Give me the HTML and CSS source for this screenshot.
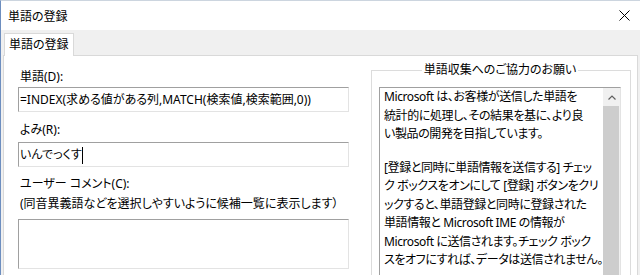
FILE: index.html
```html
<!DOCTYPE html>
<html lang="ja">
<head>
    <meta charset="UTF-8">
    <meta name="viewport" content="width=device-width, initial-scale=1.0">
    <title>単語の登録</title>
    <link rel="stylesheet" href="styles.css">
</head>
<body>
    <div class="window">
        <header class="titlebar">
            <span class="title">単語の登録</span>
            <svg class="close" width="11" height="11" viewBox="0 0 11 11">
                <path d="M0.5 0.5 L10.5 10.5 M10.5 0.5 L0.5 10.5" stroke="#000" stroke-width="1" fill="none"/>
            </svg>
        </header>

        <nav class="tabstrip">
            <div class="tab">単語の登録</div>
        </nav>

        <main class="panel">
            <section class="fields">
                <label class="label first">単語(D):</label>
                <div class="field">=INDEX(求める値がある列,MATCH(検索値,検索範囲,0))</div>

                <label class="label reading">よみ(R):</label>
                <div class="field reading-field">いんでっくす<span class="caret"></span></div>

                <label class="label comment">ユーザー コメント(C):</label>
                <div class="note">(同音異義語などを選択しやすいように候補一覧に表示します）</div>
                <div class="field comment-box"></div>
            </section>

            <fieldset class="group">
                <legend>単語収集へのご協力のお願い</legend>
                <div class="info">
                    <div class="info-text">
                        <p>Microsoft は、お客様が送信した単語を<br>統計的に処理し、その結果を基に、より良<br>い製品の開発を目指しています。</p>
                        <p>[登録と同時に単語情報を送信する] チェッ<br>ク ボックスをオンにして [登録] ボタンをクリ<br>ックすると、単語登録と同時に登録された<br>単語情報と Microsoft IME の情報が<br>Microsoft に送信されます。チェック ボック<br>スをオフにすれば、データは送信されません。</p>
                    </div>
                    <div class="scrollbar">
                        <div class="arrow">
                            <svg width="8" height="5" viewBox="0 0 8 5">
                                <path d="M0.5 4.5 L4 1 L7.5 4.5" stroke="#606060" stroke-width="1.2" fill="none"/>
                            </svg>
                        </div>
                        <div class="thumb"></div>
                    </div>
                </div>
            </fieldset>
        </main>
    </div>
</body>
</html>
```

FILE: styles.css
```css
body {
    margin: 0;
    font-family: "Noto Sans", "Noto Sans CJK JP", sans-serif;
    font-size: 12px;
    font-feature-settings: "palt";
    color: #000;
    background: #f0f0f0;
}

.window {
    width: 640px;
    height: 275px;
    overflow: hidden;
    box-sizing: border-box;
    border-left: 1px solid #6d8ebf;
    border-top: 1px solid #ccd5df;
    background: #f0f0f0;
}

.titlebar {
    height: 29px;
    background: #fff;
    display: flex;
    align-items: center;
    justify-content: space-between;
    padding: 0 10px 0 7px;
}

.tabstrip {
    height: 25px;
    box-sizing: border-box;
    padding: 3px 0 0 3px;
    display: flex;
    align-items: flex-end;
}

.tab {
    position: relative;
    height: 22px;
    line-height: 21px;
    padding: 0 4px;
    margin-bottom: -1px;
    background: #fff;
    border: 1px solid #d9d9d9;
    border-bottom: none;
}

.panel {
    display: flex;
    gap: 22px;
    height: 300px;
    margin: 0 2px;
    padding: 6px 6px 0 14px;
    background: #fff;
    border: 1px solid #d9d9d9;
}

.fields {
    width: 331px;
    padding-top: 7px;
    display: flex;
    flex-direction: column;
}

.label {
    line-height: 16px;
    padding-left: 2px;
}

.label.reading {
    margin-top: 10px;
}

.label.comment {
    margin-top: 9px;
}

.field {
    box-sizing: border-box;
    height: 25px;
    line-height: 23px;
    padding-left: 1px;
    margin-top: 2px;
    border: 1px solid;
    border-color: #a0a0a0 #e3e3e3 #e3e3e3 #a0a0a0;
    white-space: nowrap;
    overflow: hidden;
}

.reading-field {
    margin-top: 4px;
}

.caret {
    display: inline-block;
    width: 1px;
    height: 17px;
    background: #000;
    vertical-align: middle;
}

.note {
    line-height: 16px;
    padding-left: 2px;
    margin-top: 4px;
}

.comment-box {
    height: 50px;
    margin-top: 7px;
}

.group {
    width: 260px;
    height: 260px;
    box-sizing: border-box;
    margin: 0;
    min-width: 0;
    padding: 9px 9px 0 7px;
    border: 1px solid #dcdcdc;
}

.group legend {
    margin: 0 auto;
    padding: 0 2px;
    line-height: 16px;
}

.info {
    display: flex;
    height: 220px;
    border: 1px solid;
    border-color: #a0a0a0 #e3e3e3 #e3e3e3 #a0a0a0;
}

.info-text {
    flex: 1;
    min-width: 0;
    overflow: hidden;
    padding-left: 4px;
    line-height: 18.5px;
    letter-spacing: -0.4px;
    white-space: nowrap;
}

.info-text p {
    margin: 0;
}

.info-text p + p {
    margin-top: 15px;
}

.scrollbar {
    width: 17px;
    background: #f0f0f0;
    display: flex;
    flex-direction: column;
}

.arrow {
    height: 18px;
    display: flex;
    align-items: center;
    justify-content: center;
}

.thumb {
    flex: 1;
    margin-right: 1px;
    background: #cdcdcd;
}
```
